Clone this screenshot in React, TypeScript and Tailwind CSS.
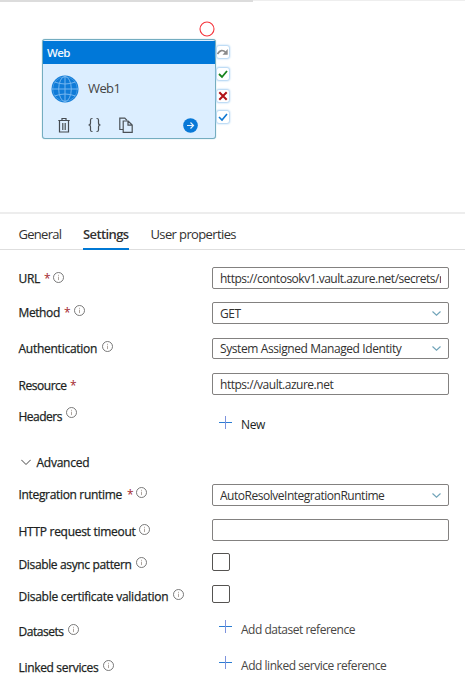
import React from "react";

function Info() {
  return (
    <svg className="block h-[11px] w-[11px] shrink-0" viewBox="0 0 11 11" fill="none" stroke="#6b6b6b">
      <circle cx="5.5" cy="5.5" r="5" strokeWidth="0.9" />
      <path d="M5.5 4.7v3.400M5.5 2.800v1" strokeWidth="0.8" stroke="#9a8f86" />
    </svg>
  );
}

function Plus() {
  return (
    <svg className="block h-[13px] w-[13px] shrink-0" viewBox="0 0 13 13" fill="none">
      <path d="M0 6.500h13" stroke="#2b7cd3" />
      <path d="M6.500 0v13" stroke="#7d93dd" />
    </svg>
  );
}

function Chevron() {
  return (
    <svg className="block h-[5px] w-[9px] shrink-0" viewBox="0 0 9 5" fill="none">
      <path d="M.5 .5l4 3.700 4-3.700" stroke="#6fa3b8" strokeWidth="1.100" />
    </svg>
  );
}

type LabelProps = {
  text: string;
  tracking: string;
  required?: boolean;
  info?: string;
  width: string;
};

function Label({ text, tracking, required, info, width }: LabelProps) {
  return (
    <div className="flex h-4">
      <span className={`shrink-0 whitespace-nowrap text-[#201f1e] [-webkit-text-stroke:0.25px_#201f1e] ${width} ${tracking}`}>{text}</span>
      {required && <span className="w-[5px] shrink-0 text-[#a4262c]">*</span>}
      {info && (
        <span className={`shrink-0 ${info}`}>
          <Info />
        </span>
      )}
    </div>
  );
}

function Row({ className, labelPad, label, children }: { className: string; labelPad: string; label: React.ReactNode; children?: React.ReactNode }) {
  return (
    <div className={`flex shrink-0 ${className}`}>
      <div className={`w-[193.500px] shrink-0 ${labelPad}`}>{label}</div>
      {children}
    </div>
  );
}

function Field({ text = "", tracking = "", height = "h-[22px]", select = false }: { text?: string; tracking?: string; height?: string; select?: boolean }) {
  return (
    <div className={`flex w-[237px] items-center rounded-[2px] border border-[#838180] px-[7px] ${height}`}>
      <span className={`mt-px min-w-0 flex-1 overflow-hidden whitespace-nowrap text-[#323130] ${tracking}`}>{text}</span>
      {select && <Chevron />}
    </div>
  );
}

function Add({ text, tracking, pad, color, drop = "mt-[2px]" }: { text: string; tracking: string; pad: string; color: string; drop?: string }) {
  return (
    <div className={`flex pl-[7px] ${pad}`}>
      <Plus />
      <span className={`ml-[9px] whitespace-nowrap ${drop} ${color} ${tracking}`}>{text}</span>
    </div>
  );
}

function Badge({ children }: { children: React.ReactNode }) {
  return (
    <div className="flex h-3 w-3 items-center justify-center rounded-[2px] bg-white shadow-[0_0_2px_1px_#a9d0f2]">
      <svg className="block h-3 w-3" viewBox="0 0 12 12" fill="none">{children}</svg>
    </div>
  );
}

function ActivityCard() {
  return (
    <div className="relative ml-[42px] mt-[37px] h-[100px] w-[174px]">
      <div className="flex h-full flex-col rounded-[3px] border border-[#74adc0] bg-[#dceeff] pt-[1px] shadow-[0_0_1px_#74adc0]">
        <div className="flex h-[23px] shrink-0 items-center bg-[#0078d9] pl-[4px] text-[11.500px] font-semibold leading-4 tracking-[-0.600px] text-[#eef6fd]">Web</div>
        <div className="flex pl-[8px] pt-[11px]">
          <svg className="block h-7 w-7" viewBox="0 0 28 28" fill="none">
            <circle cx="14" cy="14" r="13.500" fill="#0f7bd8" />
            <g stroke="#74b6f0" strokeWidth="1">
              <circle cx="14" cy="14" r="12.300" stroke="#4d9fe4" strokeWidth=".8" />
              <ellipse cx="14" cy="14" rx="6.300" ry="12.500" />
              <path d="M14 1v26M1 14h26M3.500 7q10.500 4 21 0M3.500 21q10.500-4 21 0" />
            </g>
          </svg>
          <span className="ml-[9px] mt-[3px] text-[13px] leading-5 tracking-[-0.600px] text-[#444]">Web1</span>
        </div>
        <div className="mt-[14px] flex h-4 items-center pl-[15px]">
          <svg className="block h-4 w-3" viewBox="0 0 12 16" fill="none" stroke="#454b51">
            <path d="M.3 3.500h11.400M4 3V1.500h4V3M1.500 4v11h9V4" strokeWidth="1.200" />
            <path d="M4.500 6v7M6 6v7M7.500 6v7" strokeWidth=".8" />
          </svg>
          <svg className="ml-[18px] block h-4 w-[13px]" viewBox="0 0 13 16" fill="none" stroke="#4a5056" strokeWidth="1.200">
            <path d="M4.500 1.500H4Q2.500 1.500 2.500 3v3Q2.500 8 .5 8q2 0 2 2v3q0 1.500 1.500 1.500h.5M8.500 1.500H9q1.500 0 1.500 1.500v3q0 2 2 2-2 0-2 2v3q0 1.500-1.500 1.500h-.5" />
          </svg>
          <svg className="ml-[18px] block h-4 w-[14px]" viewBox="0 0 14 16" fill="none" stroke="#4a5056" strokeWidth="1.200">
            <path d="M4 12.500H.8V1.200h5L8 3.400" />
            <path d="M4.200 4h5l4 4v7.300h-9zM9 4v4.200h4" />
          </svg>
          <svg className="ml-[50px] block h-[15px] w-[15px]" viewBox="0 0 15 15" fill="none">
            <circle cx="7.500" cy="7.500" r="7.300" fill="#0878d7" />
            <path d="M4 7.500h6.500M7.500 4.500l3 3-3 3" stroke="#e5f2fd" strokeWidth="1.200" />
          </svg>
        </div>
      </div>
      <svg className="absolute left-[156.500px] top-[-18px] h-4 w-4" viewBox="0 0 16 16" fill="none">
        <circle cx="8" cy="8" r="7" stroke="#f5333a" strokeWidth="1.100" />
      </svg>
      <div className="absolute left-[175px] top-[7px] flex flex-col gap-[9.800px]">
        <Badge>
          <path d="M.5 8Q4 2 9 6.500" stroke="#8a8a8a" strokeWidth="1.600" />
          <path d="M10.700 3v5.800H5.500z" fill="#8a8a8a" />
        </Badge>
        <Badge><path d="M2 6l3 3 5-6" stroke="#16831c" strokeWidth="1.800" /></Badge>
        <Badge><path d="M2.300 2.300l7.400 7.400M9.700 2.300L2.300 9.700" stroke="#b01218" strokeWidth="2" /></Badge>
        <Badge><path d="M2 6l3 3 5-6" stroke="#0e78d4" strokeWidth="1.600" /></Badge>
      </div>
    </div>
  );
}

export default function App() {
  return (
    <div className="flex h-[690px] w-[465px] flex-col overflow-hidden bg-white font-['Open_Sans','Noto_Sans',sans-serif] text-[12px] leading-4">
      <div className="flex h-[2px] shrink-0">
        <div className="w-[253px] bg-[#dcdcdc]" />
        <div className="h-px flex-1 bg-[#eeeeee]" />
      </div>
      <div className="h-[210px] shrink-0">
        <ActivityCard />
      </div>
      <div className="h-[2px] shrink-0 bg-[#ededed]" />
      <div className="flex h-[36px] shrink-0 border-b border-[#dedede] pl-[18.500px] text-[13px] leading-[18px] text-[#323130]">
        <div className="w-[64.500px] pt-[11px] tracking-[-0.700px]">General</div>
        <div className="h-[36px] w-[46px] whitespace-nowrap border-b-2 border-[#0078d4] pt-[11px] font-semibold tracking-[-0.600px]">Settings</div>
        <div className="ml-[21.500px] pt-[11px] tracking-[-0.620px]">User properties</div>
      </div>
      <div className="flex flex-col pl-[18.500px] pt-[17px]">
        <Row className="h-[35px]" labelPad="pt-[4px]" label={<Label text="URL" tracking="tracking-[-0.3px]" width="w-[25.500px]" required info="ml-[4px] mt-[1px]" />}>
          <Field text="https://contosokv1.vault.azure.net/secrets/r" tracking="tracking-[-0.49px]" />
        </Row>
        <Row className="h-[36px]" labelPad="pt-[3px]" label={<Label text="Method" tracking="tracking-[-0.4px]" width="w-[45.500px]" required info="ml-[5px]" />}>
          <Field text="GET" tracking="tracking-[-0.5px]" select />
        </Row>
        <Row className="h-[35px]" labelPad="pt-[3px]" label={<Label text="Authentication" tracking="tracking-[-0.26px]" width="w-[83.500px]" info="mt-0" />}>
          <Field text="System Assigned Managed Identity" tracking="tracking-[-0.4px]" select height="h-[21px]" />
        </Row>
        <Row className="h-[35px]" labelPad="pt-[5px]" label={<Label text="Resource" tracking="tracking-[-0.46px]" width="w-[51.500px]" required />}>
          <Field text="https://vault.azure.net" tracking="tracking-[-0.48px]" />
        </Row>
        <Row className="h-[44px]" labelPad="pt-[1px]" label={<Label text="Headers" tracking="tracking-[-0.5px]" width="w-[47.500px]" info="mt-[-2px]" />}>
          <Add text="New" tracking="tracking-[-0.4px]" pad="pt-[8px]" color="text-[#201f1e]" drop="mt-[1px]" />
        </Row>
        <div className="flex h-[32px] items-start pt-[3px]">
          <svg className="ml-[2px] mt-[4px] block h-[7px] w-[10px]" viewBox="0 0 10 7" fill="none"><path d="M.3 .8l4.700 4.700L9.700 .8" stroke="#444" /></svg>
          <span className="ml-[6px] tracking-[-0.25px] text-[#201f1e] [-webkit-text-stroke:0.25px_#201f1e]">Advanced</span>
        </div>
        <Row className="h-[35px]" labelPad="pt-[3px]" label={<Label text="Integration runtime" tracking="tracking-[-0.33px]" width="w-[108.500px]" required info="ml-[4px]" />}>
          <Field text="AutoResolveIntegrationRuntime" tracking="tracking-[-0.48px]" select />
        </Row>
        <Row className="h-[34px]" labelPad="pt-[5px]" label={<Label text="HTTP request timeout" tracking="tracking-[-0.28px]" width="w-[120.500px]" info="mt-0" />}>
          <Field />
        </Row>
        <Row className="h-[32px]" labelPad="pt-[4px]" label={<Label text="Disable async pattern" tracking="tracking-[-0.36px]" width="w-[117.500px]" info="mt-0" />}>
          <div className="h-[18px] w-[18px] rounded-[2px] border border-[#555351]" />
        </Row>
        <Row className="h-[32px]" labelPad="pt-[4px]" label={<Label text="Disable certificate validation" tracking="tracking-[-0.25px]" width="w-[154.500px]" info="mt-0" />}>
          <div className="h-[18px] w-[18px] rounded-[2px] border border-[#555351]" />
        </Row>
        <Row className="h-[35px]" labelPad="pt-[7px]" label={<Label text="Datasets" tracking="tracking-[-0.46px]" width="w-[49.500px]" info="mt-0" />}>
          <Add text="Add dataset reference" tracking="tracking-[-0.48px]" pad="pt-[3px]" color="text-[#484644]" />
        </Row>
        <Row className="h-[36px]" labelPad="pt-[8px]" label={<Label text="Linked services" tracking="tracking-[-0.33px]" width="w-[84.500px]" info="mt-0" />}>
          <Add text="Add linked service reference" tracking="tracking-[-0.46px]" pad="pt-[4px]" color="text-[#484644]" />
        </Row>
      </div>
    </div>
  );
}
